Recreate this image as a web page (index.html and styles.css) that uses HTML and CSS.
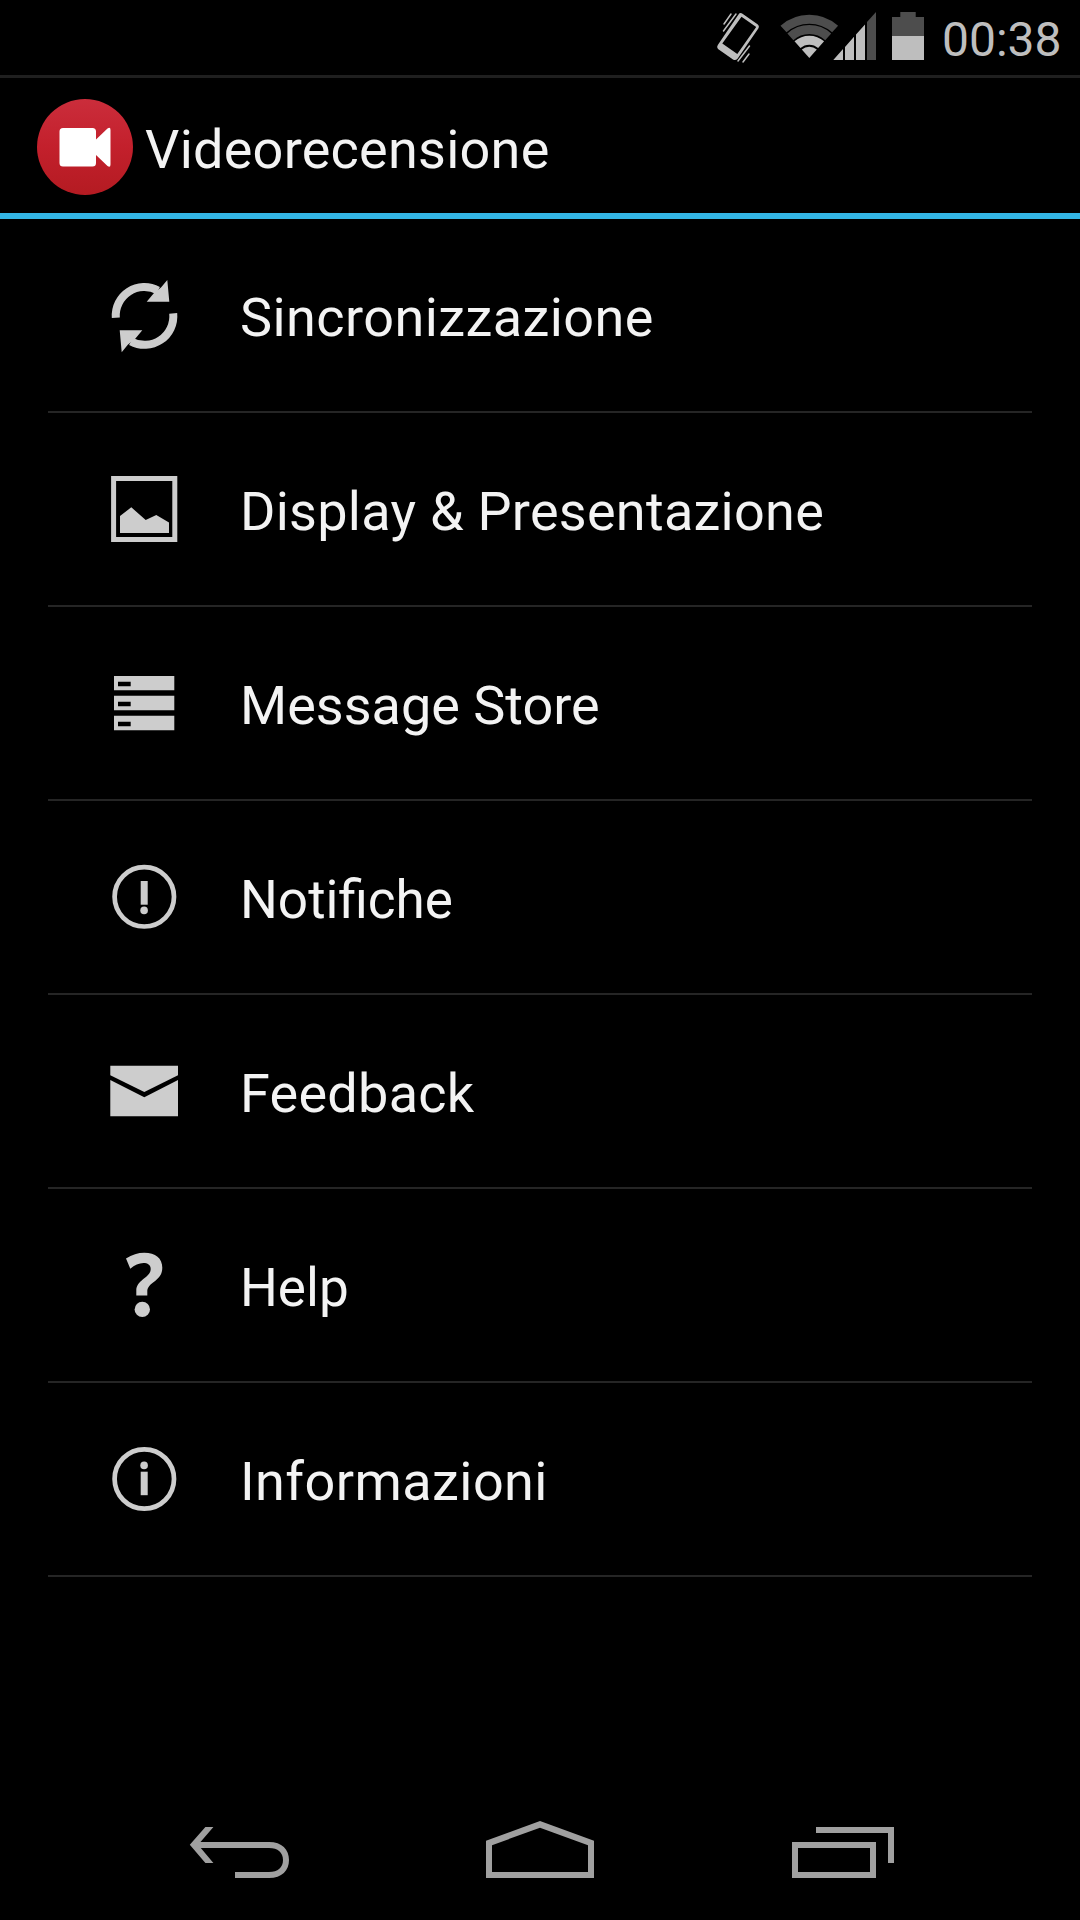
FILE: index.html
```html
<!DOCTYPE html>
<html lang="it">
<head>
    <meta charset="UTF-8">
    <meta name="viewport" content="width=device-width, initial-scale=1.0">
    <title>Videorecensione</title>
    <link rel="stylesheet" href="styles.css">
</head>
<body>
    <div class="status-bar">
        <svg class="vibrate" width="48" height="75" viewBox="0 0 48 75">
            <path fill="#bebebe" fill-rule="evenodd" d="M24.5 14.5 Q26 12.2 28.5 13.7 L43.5 24.2 Q45.8 26 44.3 28.5 L23.5 58.7 Q21.5 61 19 59.5 L4 49 Q2.2 47.3 3.8 45 Z M27.5 16.7 L8.3 43.5 L23.3 54 L42.2 27 Z"/>
            <path stroke="#bebebe" stroke-width="1.5" stroke-linecap="round" fill="none" d="M17 14 L10 24 M22 14 L9.5 31 M35.5 46 L24 61 M35 54 L29 62"/>
        </svg>
        <svg class="signal" width="96" height="75" viewBox="0 0 96 75">
            <path stroke="#4d4d4d" stroke-width="9" fill="none" d="M3.5 29 A38.8 38.8 0 0 1 55.1 29 M10.4 36.8 A28.4 28.4 0 0 1 48.2 36.8"/>
            <path stroke="#bebebe" stroke-width="9" fill="none" d="M17.5 44.7 A17.8 17.8 0 0 1 41.1 44.7"/>
            <path fill="#bebebe" d="M29.3 58 L21.8 49.6 A11.3 11.3 0 0 1 36.8 49.6 Z"/>
            <path fill="#bebebe" d="M53.3 60 L63 49 V60 Z M65 46.9 L74 36.7 V60 H65 Z M76 34.5 L85 24.4 V60 H76 Z"/>
            <path fill="#4d4d4d" d="M87 22.1 L96 12 V60 H87 Z"/>
        </svg>
        <svg class="battery" width="32" height="75" viewBox="0 0 32 75">
            <path fill="#4d4d4d" d="M8.3 12 H23.7 V17 H32 V36 H0 V17 H8.3 Z"/>
            <rect fill="#bebebe" y="36" width="32" height="24"/>
        </svg>
        <span class="clock">00:38</span>
    </div>

    <div class="header">
        <svg class="logo" width="96" height="96" viewBox="0 0 96 96">
            <defs>
                <linearGradient id="red" x1="0" y1="0" x2="0" y2="1">
                    <stop offset="0" stop-color="#cb2d3b"/>
                    <stop offset="0.5" stop-color="#c3202c"/>
                    <stop offset="1" stop-color="#b41b22"/>
                </linearGradient>
            </defs>
            <circle cx="48" cy="48" r="48" fill="url(#red)"/>
            <path fill="#fff" d="M26 29 H55.5 Q59 29 59 32.5 V40.5 L70.5 29.5 Q73.5 27.5 73.5 31 V65.5 Q73.5 69 70.5 67 L59 56 V64 Q59 67.5 55.5 67.5 H26 Q22.5 67.5 22.5 64 V32.5 Q22.5 29 26 29 Z"/>
        </svg>
        <h1>Videorecensione</h1>
    </div>

    <ul class="menu">
        <li class="item">
            <svg class="icon" viewBox="0 0 96 96">
                <path class="line" stroke-width="8" d="M19.8 50.7 A28.7 28.7 0 0 1 62 23.4"/>
                <path d="M71.3 13 L73.3 34.7 H50.7 L58 26 L65 20.5 Z"/>
                <path class="line" stroke-width="8" d="M77.2 46.3 A28.7 28.7 0 0 1 35 74.4"/>
                <path d="M25.7 85.3 L23.7 63.3 H46.3 L39 72 L32 77.5 Z"/>
            </svg>
            <span class="wide">Sincronizzazione</span>
        </li>
        <li class="item">
            <svg class="icon" viewBox="0 0 96 96">
                <rect class="line" x="17.6" y="17.5" width="61.2" height="61" stroke-width="5"/>
                <path d="M24 55 L35.3 46.3 L49.7 59 L60.3 54 L73 61.6 V72 H24 Z"/>
            </svg>
            <span class="loose">Display &amp; Presentazione</span>
        </li>
        <li class="item">
            <svg class="icon" viewBox="0 0 96 96">
                <path fill-rule="evenodd" d="M18 21 H78.3 V35.3 H18 Z M22 26.7 V31.3 H34.7 V26.7 Z M18 40.7 H78.3 V55.3 H18 Z M22 46.7 V51.3 H34.7 V46.7 Z M18 60.7 H78.3 V75.3 H18 Z M22 66.7 V71.3 H34.7 V66.7 Z"/>
            </svg>
            <span>Message Store</span>
        </li>
        <li class="item">
            <svg class="icon" viewBox="0 0 96 96">
                <circle class="line" cx="48.3" cy="47.8" r="29.7" stroke-width="4.7"/>
                <rect x="44.7" y="32" width="7" height="23.7"/>
                <circle cx="48.1" cy="61.4" r="3.8"/>
            </svg>
            <span class="narrow">Notifiche</span>
        </li>
        <li class="item">
            <svg class="icon" viewBox="0 0 96 96">
                <path d="M14.3 22.7 H82 V32.3 L48.3 49.1 L14.3 32.3 Z"/>
                <path d="M14.3 37.1 L48.3 54.3 L82 37.1 V73.3 H14.3 Z"/>
            </svg>
            <span class="loose">Feedback</span>
        </li>
        <li class="item">
            <svg class="icon" viewBox="0 0 96 96">
                <path d="M30 21.4 C36 17.7 42 15.7 48.3 15.7 C59.5 15.7 66.3 21.2 66.3 30.7 C66.3 44.7 51.3 44.7 51.3 54.7 V58.4 H40.3 V53.7 C40.3 42.7 54.7 40.7 54.7 32 C54.7 27.7 51.5 26 47.5 26 C43 26 38.5 28.2 34.3 31.7 Z"/>
                <circle cx="46.3" cy="72.4" r="7.7"/>
            </svg>
            <span class="narrow">Help</span>
        </li>
        <li class="item">
            <svg class="icon" viewBox="0 0 96 96">
                <circle class="line" cx="48.3" cy="48" r="29.7" stroke-width="4.7"/>
                <circle cx="48.1" cy="34.4" r="3.8"/>
                <rect x="44.7" y="40.7" width="7" height="23.5"/>
            </svg>
            <span class="wide">Informazioni</span>
        </li>
    </ul>

    <div class="nav-bar">
        <svg width="120" height="144" viewBox="0 0 120 144">
            <path fill="#a0a0a0" d="M9.8 68.7 L25.4 51 H33.4 L20.5 66 H89 C102 66 109 73.5 109 84 C109 94.5 102 102 89 102 H55 V96 H89 C98 96 103 91.5 103 84 C103 76.5 98 72 89 72 H20.8 L33.4 87 H25.4 Z"/>
        </svg>
        <svg width="120" height="144" viewBox="0 0 120 144">
            <path fill="#a0a0a0" fill-rule="evenodd" d="M60 45 L114 64.7 V102 H6 V64.7 Z M60 51.7 L12 69.2 V96 H108 V69.2 Z"/>
        </svg>
        <svg width="120" height="144" viewBox="0 0 120 144">
            <path fill="none" stroke="#a0a0a0" stroke-width="6" d="M15 69 H93 V99 H15 Z M36 54 H111 V87"/>
        </svg>
    </div>
</body>
</html>
```
FILE: styles.css
```css
* {
    box-sizing: border-box;
}

body {
    margin: 0;
    height: 1920px;
    background-color: #000;
    color: #f3f3f3;
    font-family: Roboto, sans-serif;
    display: flex;
    flex-direction: column;
}

svg {
    display: block;
    flex-shrink: 0;
}

.status-bar {
    height: 78px;
    padding-right: 18px;
    border-bottom: 3px solid #1f1f1f;
    display: flex;
    justify-content: flex-end;
}

.signal {
    margin-left: 18px;
}

.battery {
    margin-left: 16px;
}

.clock {
    width: 120px;
    margin-left: 18px;
    color: #bebebe;
    font-size: 48px;
    line-height: 80px;
}

.header {
    height: 141px;
    padding: 0 0 0 37px;
    border-bottom: 6px solid #33b5e5;
    display: flex;
    align-items: center;
}

.logo {
    margin-top: 3px;
}

h1 {
    margin: 7px 0 0 12px;
    font-size: 54px;
    font-weight: normal;
    letter-spacing: 0.25px;
}

.menu {
    flex: 1;
    margin: 0;
    padding: 0 48px;
    list-style: none;
}

.item {
    height: 194px;
    padding-left: 48px;
    border-bottom: 2px solid #252525;
    display: flex;
    align-items: center;
    gap: 48px;
    font-size: 54px;
    line-height: 64px;
}

.item span {
    margin-top: 6px;
}

.wide {
    letter-spacing: 0.43px;
}

.loose {
    letter-spacing: 0.27px;
}

.narrow {
    transform: scaleX(0.983);
    transform-origin: left;
}

.icon {
    width: 96px;
    height: 96px;
    fill: #cdcdcd;
}

.line {
    fill: none;
    stroke: #cdcdcd;
}

.nav-bar {
    height: 144px;
    padding: 0 180px;
    display: flex;
    justify-content: space-between;
}
```
